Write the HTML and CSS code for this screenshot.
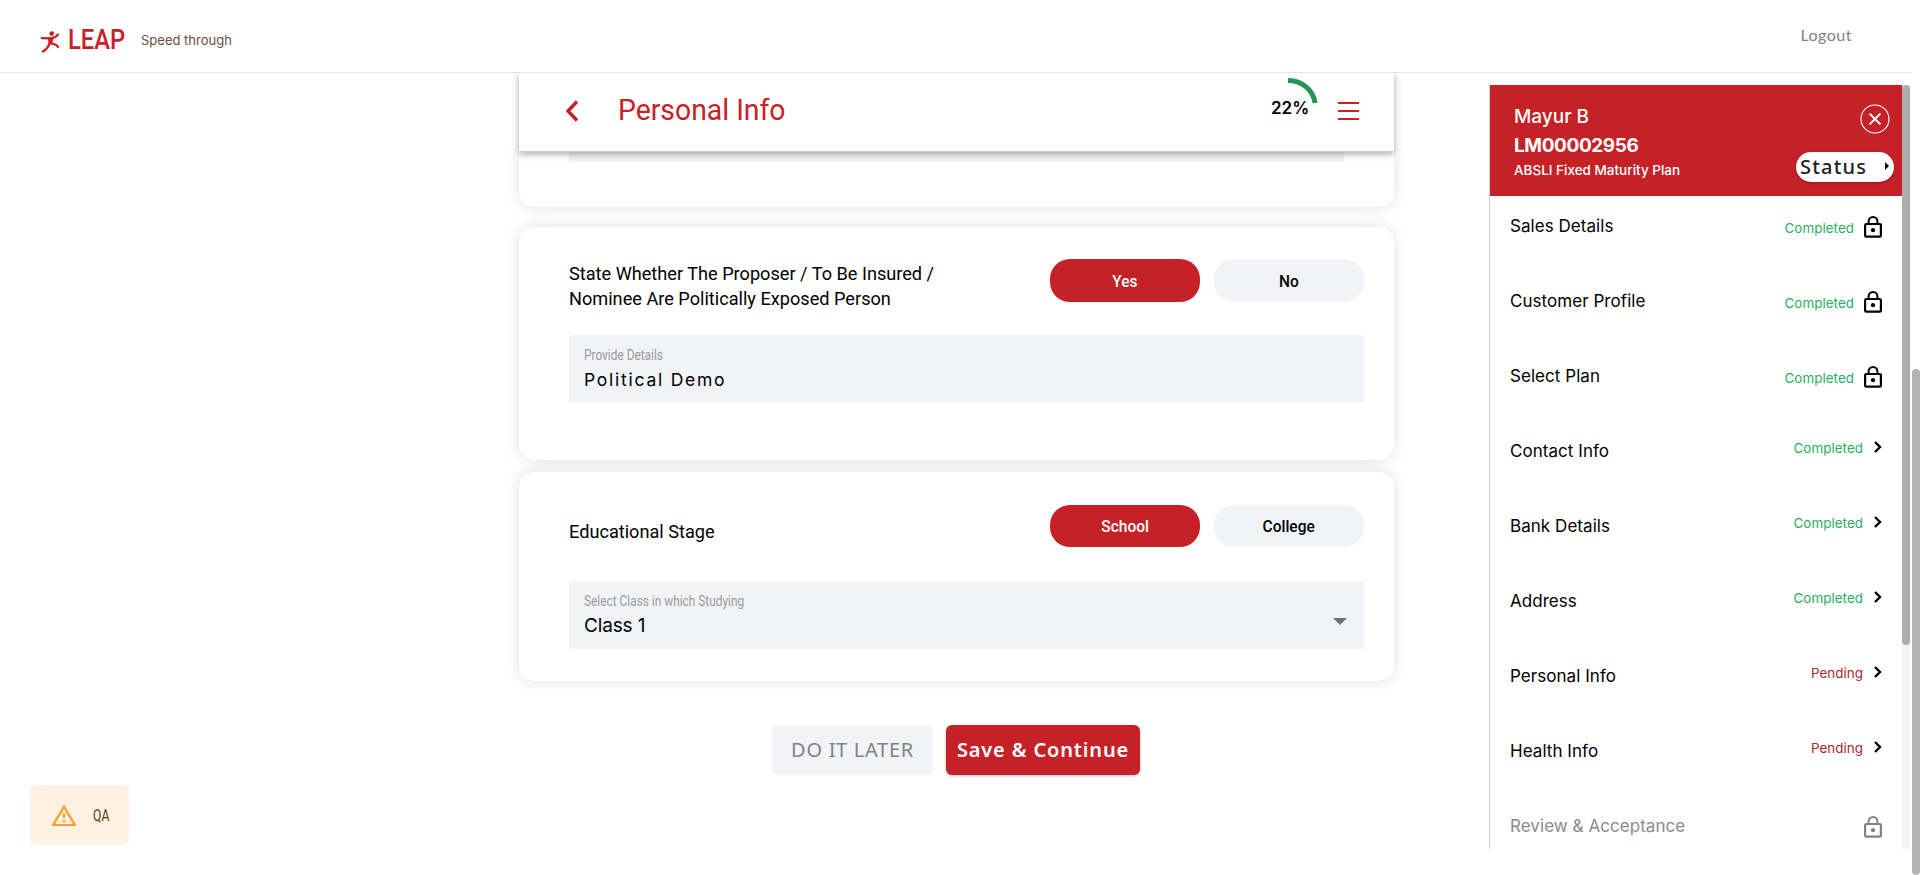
FILE: index.html
```html
<!DOCTYPE html>
<html lang="en">
<head>
<meta charset="utf-8">
<title>LEAP - Personal Info</title>
<link rel="stylesheet" href="styles.css">
</head>
<body>
<svg class="defs" width="0" height="0">
  <symbol id="lock" viewBox="0 0 18 22"><path d="M4.600 8V5.400a4.400 4.400 0 0 1 8.800 0V8" fill="none" stroke="currentColor" stroke-width="2"/><rect x="1.100" y="8" width="15.800" height="12.700" rx="1.200" fill="none" stroke="currentColor" stroke-width="2.200"/><circle cx="9" cy="14.200" r="2.100" fill="currentColor"/></symbol>
  <symbol id="chev" viewBox="0 0 8 12"><path d="M1 1l5 5-5 5" fill="none" stroke="currentColor" stroke-width="2.400"/></symbol>
</svg>
<div class="window">
  <div class="page">
    <header class="topbar">
      <div class="brand">
        <svg class="runner" width="20" height="22" viewBox="0 0 20 22"><circle cx="11.700" cy="2.600" r="2.300" fill="#c72128"/><path d="M1.800 7.200L11 7.400Q15.500 6.800 18 3.600M11 7.600L9.200 13.400Q7.500 18 3 20.600M10 12.200L14.200 13.200Q17 13.800 18 16" fill="none" stroke="#c72128" stroke-width="2.300" stroke-linecap="round" stroke-linejoin="round"/><path d="M8 6.600L13.500 7L12 13L8.600 13.500Z" fill="#c72128"/></svg>
        <span class="logo"><b>LEAP</b></span>
        <span class="tagline">Speed through</span>
      </div>
      <a class="logout">Logout</a>
    </header>
    <div class="body">
      <div class="left">
        <div class="env">
          <svg width="26" height="23" viewBox="0 0 26 23"><path d="M13 2.600L23.800 21H2.200Z" fill="none" stroke="#ff9f1c" stroke-width="2.200"/><path d="M13 9v5M13 16v2.200" stroke="#ff9f1c" stroke-width="2.200"/></svg>
          <span><b>QA</b></span>
        </div>
      </div>
      <main class="main">
        <div class="titlebar">
          <svg class="back" width="14" height="22" viewBox="0 0 14 22"><path d="M12 1.500L3 11l9 9.500" fill="none" stroke="#c72128" stroke-width="3.400"/></svg>
          <h1>Personal Info</h1>
          <div class="progress"><b>22%</b><svg width="30" height="27" viewBox="0 0 30 27"><path d="M0 2.500A27 25.500 0 0 1 27 25" fill="none" stroke="#219653" stroke-width="5"/></svg></div>
          <div class="menu"><i></i><i></i><i></i></div>
        </div>
        <section class="card prev"><div class="stub"></div></section>
        <section class="card pep">
          <div class="row">
            <p class="q">State Whether The Proposer / To Be Insured /<br>Nominee Are Politically Exposed Person</p>
            <div class="opts"><button class="pill on"><span>Yes</span></button><button class="pill"><span>No</span></button></div>
          </div>
          <div class="field"><label>Provide Details</label><span class="typed">Political Demo</span></div>
        </section>
        <section class="card edu">
          <div class="row">
            <p class="q">Educational Stage</p>
            <div class="opts"><button class="pill on"><span>School</span></button><button class="pill"><span>College</span></button></div>
          </div>
          <div class="field"><label>Select Class in which Studying</label><span class="chosen">Class 1</span><i class="caret"></i></div>
        </section>
        <div class="actions"><button class="later">DO IT LATER</button><button class="save">Save &amp; Continue</button></div>
      </main>
      <aside class="side">
        <div class="panel">
          <div class="head">
            <div class="who"><span class="name">Mayur B</span><span class="code">LM00002956</span><span class="plan">ABSLI Fixed Maturity Plan</span></div>
            <div class="tools">
              <svg class="close" width="30" height="30" viewBox="0 0 30 30"><circle cx="15" cy="15" r="14" fill="none" stroke="#fff" stroke-width="1.100"/><path d="M9.600 9.600l10.800 10.800M20.400 9.600L9.600 20.400" stroke="#fff" stroke-width="2"/></svg>
              <button class="status">Status<i></i></button>
            </div>
          </div>
          <ul class="steps">
            <li><span>Sales Details</span><em>Completed</em><svg class="lock"><use href="#lock"/></svg></li>
            <li><span>Customer Profile</span><em>Completed</em><svg class="lock"><use href="#lock"/></svg></li>
            <li><span>Select Plan</span><em>Completed</em><svg class="lock"><use href="#lock"/></svg></li>
            <li class="go"><span>Contact Info</span><em>Completed</em><svg class="chev"><use href="#chev"/></svg></li>
            <li class="go"><span>Bank Details</span><em>Completed</em><svg class="chev"><use href="#chev"/></svg></li>
            <li class="go"><span>Address</span><em>Completed</em><svg class="chev"><use href="#chev"/></svg></li>
            <li class="go pending"><span>Personal Info</span><em>Pending</em><svg class="chev"><use href="#chev"/></svg></li>
            <li class="go pending"><span>Health Info</span><em>Pending</em><svg class="chev"><use href="#chev"/></svg></li>
            <li class="off"><span>Review &amp; Acceptance</span><svg class="lock"><use href="#lock"/></svg></li>
          </ul>
        </div>
        <div class="track"><div class="thumb"></div></div>
      </aside>
    </div>
  </div>
  <div class="scroll"><div class="thumb"></div></div>
</div>
</body>
</html>
```

FILE: styles.css
```css
* { box-sizing: border-box; }
body { margin: 0; background: #fff; color: #000; font-family: Roboto, "Liberation Sans", sans-serif; overflow: hidden; }
button { border: 0; padding: 0; font-family: inherit; }
i, em { font-style: normal; }
.defs { display: block; position: absolute; }
.window { display: flex; width: 1920px; height: 875px; }
.page { width: 1912px; display: flex; flex-direction: column; }
.scroll { width: 8px; padding-top: 369px; }
.scroll .thumb { height: 506px; background: #b4b4b4; border-radius: 4px; }

.topbar { flex: none; height: 73px; border-bottom: 1px solid #e2e3e7; display: flex; justify-content: space-between; padding: 0 60px 0 40px; }
.brand { display: flex; align-items: center; padding-top: 8px; }
.runner { margin-top: 3px; }
.logo { width: 57px; margin-left: 8px; color: #c72128; font-size: 28px; line-height: 32px; }
.logo b { display: inline-block; font-weight: 500; transform: scaleX(.85); transform-origin: left; }
.tagline { margin-left: 16px; font-family: Inter, sans-serif; font-size: 13px; color: #6d4c41; }
.logout { margin-top: 25px; font: 16px/20px Lato, sans-serif; letter-spacing: .5px; color: #828282; }

.body { flex: 1; display: flex; min-height: 0; }
.left { width: 519px; display: flex; align-items: flex-end; padding: 0 0 30px 30px; }
.env { width: 99px; height: 60px; border-radius: 5px; background: #fff2e5; display: flex; align-items: center; padding-left: 21px; font-size: 17px; color: #5c3d00; }
.env svg { flex: none; margin-right: 16px; }
.env b { display: inline-block; font-weight: 400; transform: scaleX(.72); transform-origin: left; }

.main { width: 875px; }
.titlebar { position: relative; z-index: 2; height: 79px; background: #fff; border-bottom: 1px solid #d0d0d0; box-shadow: 0 2px 7px rgba(0,0,0,.35); clip-path: inset(0 -20px -20px -20px); display: flex; padding-left: 46px; }
.back { margin-top: 27px; }
h1 { margin: 18px 0 0 39px; width: 631px; font-size: 30px; line-height: 38px; font-weight: 400; color: #c72128; transform: scaleX(.945); transform-origin: left; }
.progress { width: 67px; position: relative; margin-left: 22px; }
.progress b { display: block; margin-top: 24px; font: 600 17px/22px Inter, sans-serif; }
.progress svg { position: absolute; left: 17px; top: 5px; }
.menu { display: flex; flex-direction: column; gap: 6px; padding-top: 29px; }
.menu i { width: 21px; height: 2px; background: #c72128; }

.card { background: #fff; border-radius: 15px; box-shadow: 0 0 15px rgba(0,0,0,.13); padding: 0 30px 0 50px; }
.prev { height: 55px; border-radius: 0 0 15px 15px; }
.stub { width: 775px; height: 10px; background: #f1f3f7; }
.pep { height: 233px; margin-top: 20px; padding-top: 32px; }
.edu { height: 209px; margin-top: 12px; padding-top: 33px; }
.row { display: flex; justify-content: space-between; height: 76px; }
.q { margin: 2px 0 0; font-size: 19px; line-height: 25px; white-space: nowrap; transform: scaleX(.955); transform-origin: left; }
.edu .q { margin-top: 14px; height: 25px; }
.opts { display: flex; gap: 14px; }
.pill { width: 150px; height: 43px; border-radius: 20px; background: #f1f3f7; font-size: 17px; font-weight: 500; color: #000; }
.edu .pill { height: 42px; }
.pill span { display: inline-block; transform: scaleX(.91); }
.pill.on { background: #c72128; color: #fff; }
.field { position: relative; height: 67px; border-radius: 4px 4px 0 0; background: #f1f3f7; padding: 11px 15px 0; }
.edu .field { height: 68px; }
.field label { display: block; font-size: 14px; line-height: 19px; color: #9a9a9a; white-space: nowrap; transform: scaleX(.848); transform-origin: left; }
.field span { display: block; line-height: 29px; font-family: Inter, sans-serif; }
.typed { font-size: 17.5px; letter-spacing: 1.75px; }
.chosen { font-size: 19px; letter-spacing: -.15px; }
.caret { position: absolute; right: 17px; top: 37px; border: 7px solid transparent; border-top-color: #707070; border-bottom: 0; }
.actions { display: flex; justify-content: center; gap: 13px; margin-top: 44px; padding-right: 1px; }
.actions button { height: 50px; border-radius: 6px; font: 20px/50px "Noto Sans", sans-serif; }
.actions .later { width: 161px; background: #f1f3f7; color: #828282; letter-spacing: .7px; }
.actions .save { width: 194px; background: #c72128; color: #fff; font-weight: 600; letter-spacing: .85px; box-shadow: 0 1px 3px rgba(0,0,0,.25); }

.side { width: 421px; height: 764px; margin: 12px 0 0 95px; display: flex; border-left: 1px solid #cfcfcf; font-family: Inter, sans-serif; }
.panel { width: 412px; height: 764px; overflow: hidden; }
.track { width: 8px; background: #f1f3f7; }
.track .thumb { height: 560px; background: #abadb1; border-radius: 4px; }
.head { height: 111px; background: #c72128; color: #fff; display: flex; justify-content: space-between; padding: 0 8px 0 24px; }
.who { display: flex; flex-direction: column; padding-top: 17px; font-weight: 500; }
.name { font-size: 19px; line-height: 29px; }
.code { font-size: 19px; line-height: 29px; font-weight: 700; letter-spacing: -.4px; }
.plan { font-size: 13.5px; line-height: 21px; }
.tools { display: flex; flex-direction: column; align-items: flex-end; padding-top: 19px; }
.close { margin-right: 4px; }
.status { margin-top: 18px; width: 98px; height: 30px; border-radius: 15px; background: #fff; color: #212121; font: 500 20px/29px "Noto Sans", sans-serif; letter-spacing: 1.2px; display: flex; align-items: center; justify-content: space-between; padding: 0 5px 2px 4px; box-shadow: 0 1px 3px rgba(0,0,0,.3); }
.status i { border: 4px solid transparent; border-left-color: #000; border-right: 0; }
.steps { list-style: none; margin: 0; padding: 0; }
.steps li { height: 75px; display: flex; align-items: flex-start; padding: 19px 20px 0 20px; font-size: 17px; line-height: 22px; letter-spacing: .05px; }
.steps span { flex: 1; }
.steps em { margin-top: 2px; font-size: 13.4px; color: #27ae60; }
.lock { width: 18px; height: 22px; margin: 1px 0 0 10px; }
.chev { width: 8px; height: 12px; margin: 1px 0 0 11px; }
.go em { margin-top: -3px; }
.go.pending em { color: #a52a2a; }
.steps .off { color: #8a8a8a; }
.off .lock { color: #828282; }
```
